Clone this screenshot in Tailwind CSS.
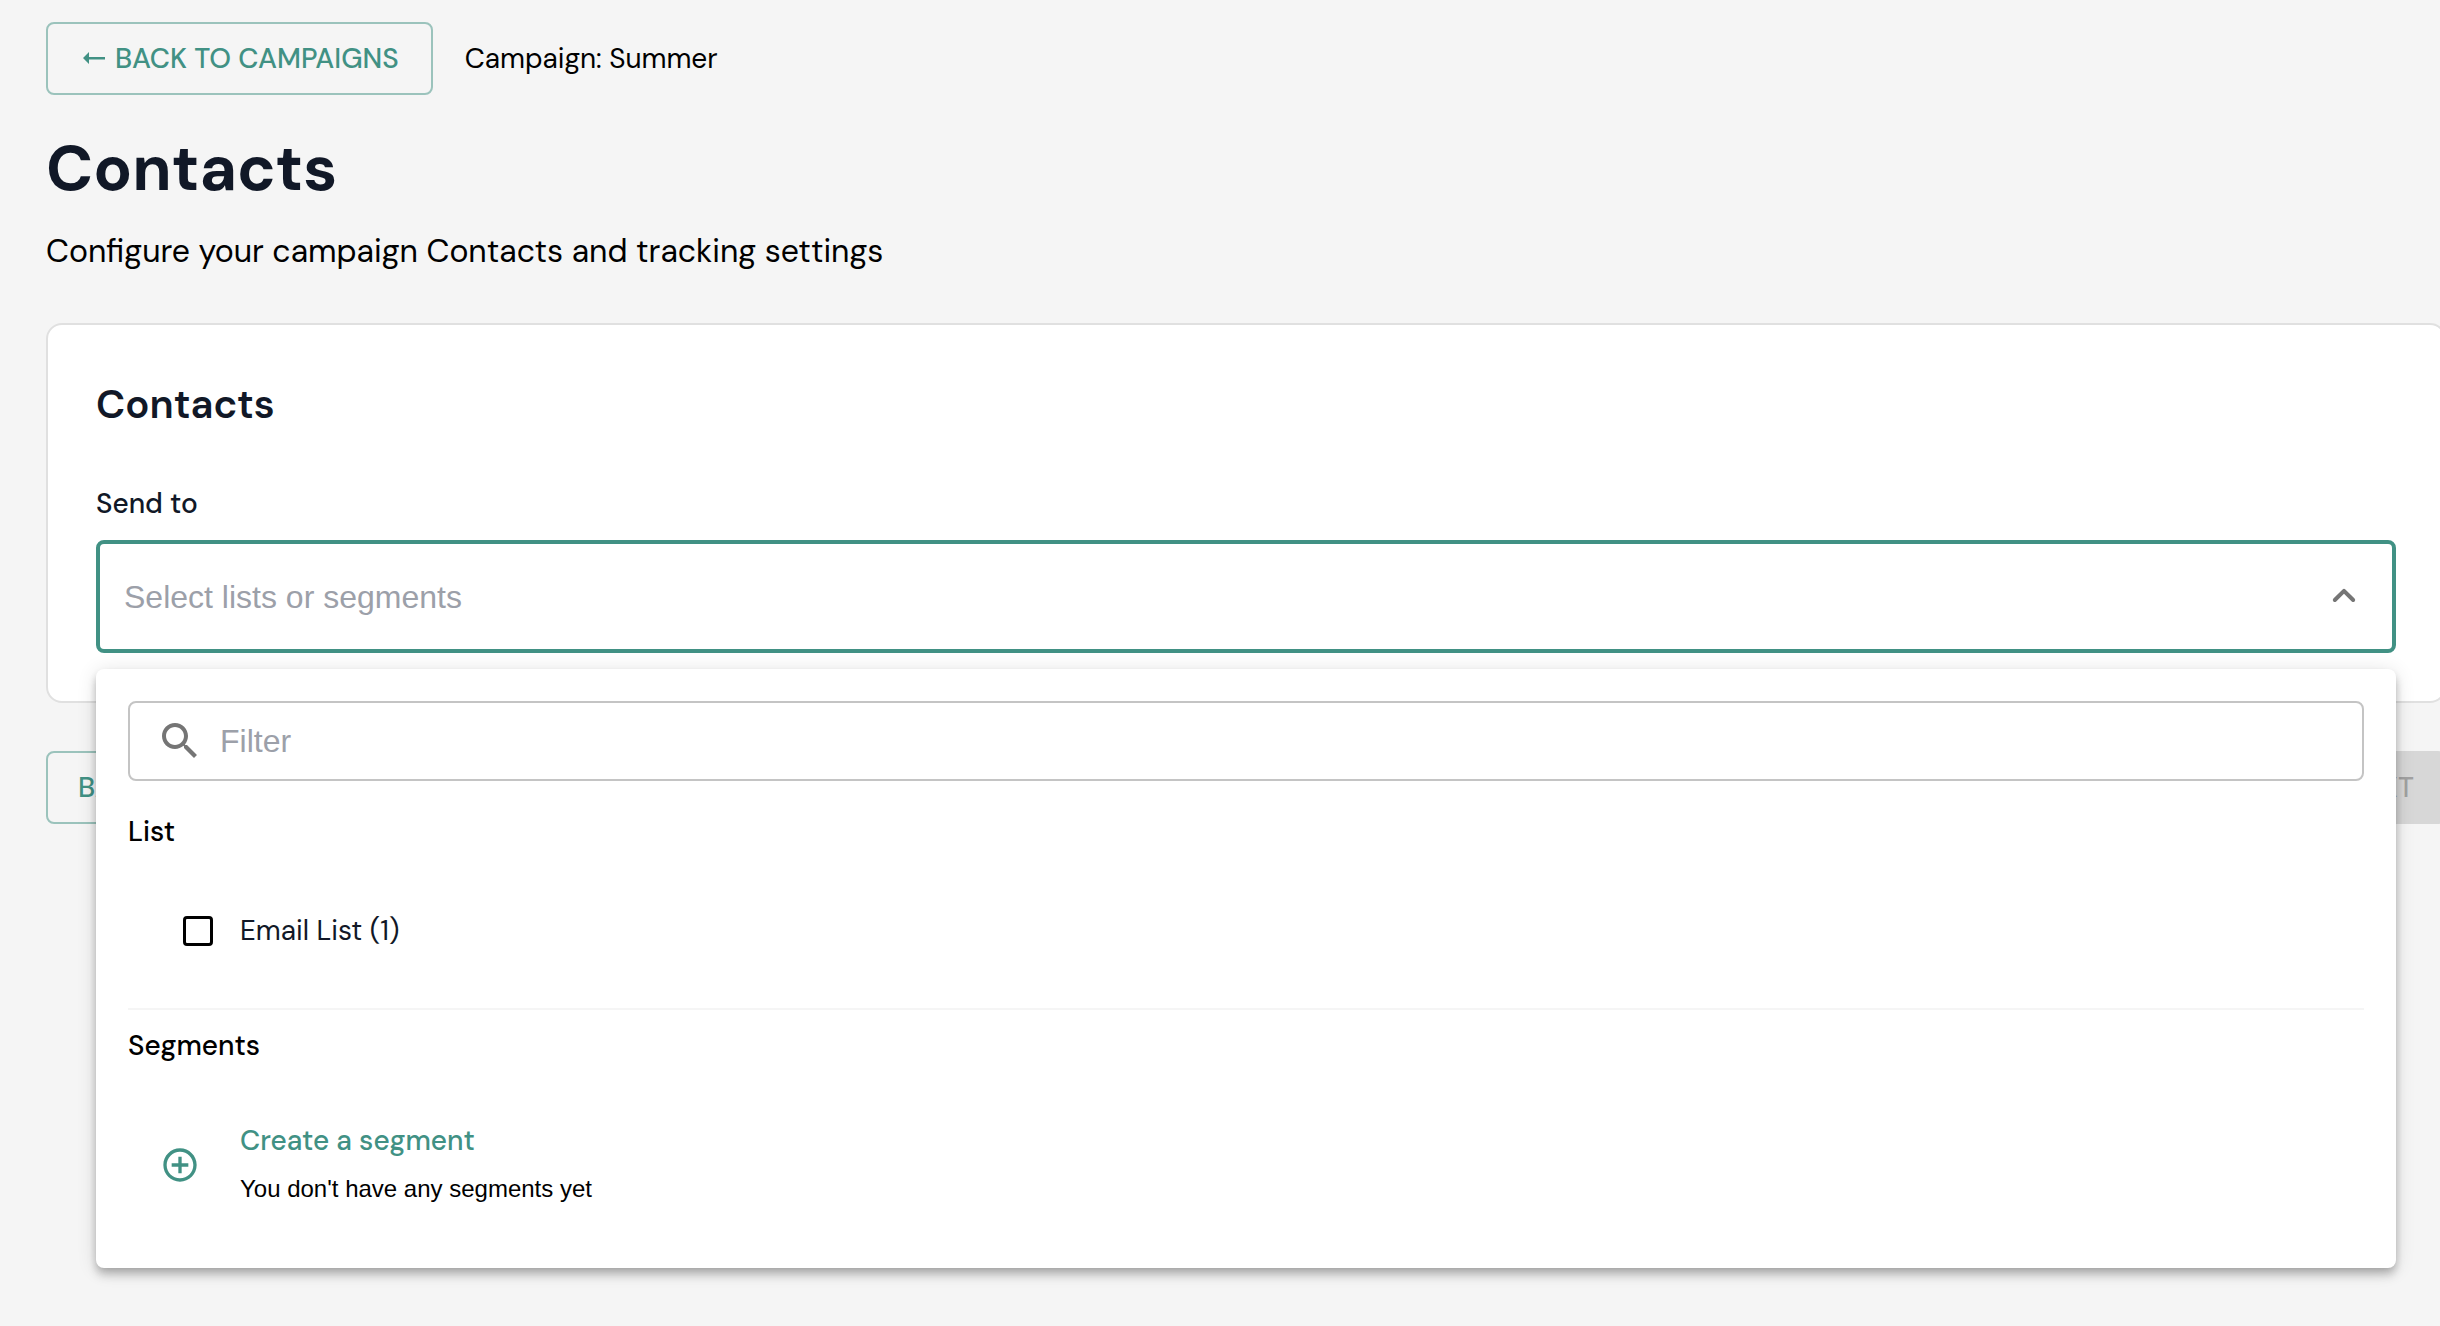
<!DOCTYPE html>
<html lang="en">
<head>
    <meta charset="UTF-8">
    <meta name="viewport" content="width=device-width, initial-scale=1.0">
    <title>Campaign Contacts</title>
    <script src="https://cdn.jsdelivr.net/npm/@tailwindcss/browser@4"></script>
</head>
<body class="min-h-screen overflow-x-hidden bg-[#f5f5f5] text-black font-['DM_Sans','Open_Sans',sans-serif]">
    <main class="ml-[46px] -mr-[6px] pt-[22px]">
        <div class="flex items-center gap-8">
            <button class="flex items-center gap-[7px] border-2 border-[#419184]/50 rounded-lg px-8 py-[10px] text-[28px] leading-[49px] font-medium text-[#419184]">
                <svg class="size-7" viewBox="0 0 28 28" fill="currentColor">
                    <path d="M3 13 9 7v5h16v2.4H9V19z"/>
                </svg>
                BACK TO CAMPAIGNS
            </button>
            <span class="text-[28px] leading-[49px]">Campaign: Summer</span>
        </div>

        <h1 class="mt-8 text-[64px] leading-[84px] font-bold text-[#111827]">Contacts</h1>
        <p class="mt-4 text-[32px] leading-[48px]">Configure your campaign Contacts and tracking settings</p>

        <section class="mt-12 border-2 border-[#e0e0e0] rounded-2xl bg-white p-12">
            <h2 class="text-[40px] leading-[62px] font-semibold text-[#111827]">Contacts</h2>
            <label for="sendTo" class="block mt-12 text-[28px] leading-[41px] font-medium text-[#111827]">Send to</label>

            <div class="relative mt-4">
                <select id="sendTo" class="block w-full h-[113px] appearance-none border-4 border-[#419184] rounded-lg bg-white px-6 text-[32px] text-[#9ca0a9] font-['Liberation_Sans',Arial,sans-serif] outline-none">
                    <option value="">Select lists or segments</option>
                </select>
                <svg class="absolute right-[28px] top-[32px] size-12 pointer-events-none" viewBox="0 0 24 24" fill="#757575">
                    <path d="M11.29 8.71 6.7 13.3a1 1 0 0 0 0 1.41 1 1 0 0 0 1.41 0L12 10.83l3.88 3.88a1 1 0 0 0 1.41 0 1 1 0 0 0 0-1.41L12.7 8.71a1 1 0 0 0-1.41 0z"/>
                </svg>

                <!-- Dropdown panel -->
                <div class="absolute inset-x-0 top-full z-10 mt-4 rounded-lg bg-white px-8 pt-8 pb-[58px] shadow-[0_4px_8px_-2px_rgba(0,0,0,0.2),0_8px_10px_0_rgba(0,0,0,0.14),0_2px_20px_0_rgba(0,0,0,0.12)]">
                    <div class="flex items-center gap-4 h-20 border-2 border-[#c4c4c4] rounded-lg pl-[26px] pr-6">
                        <svg class="size-12 shrink-0" viewBox="0 0 24 24" fill="#757575">
                            <path d="M15.5 14h-.79l-.28-.27C15.41 12.59 16 11.11 16 9.5 16 5.91 13.09 3 9.5 3S3 5.91 3 9.5 5.91 16 9.5 16c1.61 0 3.09-.59 4.23-1.57l.27.28v.79l5 4.99L20.49 19l-4.99-5zm-6 0C7.01 14 5 11.99 5 9.5S7.01 5 9.5 5 14 7.01 14 9.5 11.99 14 9.5 14z"/>
                        </svg>
                        <input id="filter" type="text" aria-label="Filter" placeholder="Filter" class="grow min-w-0 bg-transparent text-[32px] placeholder:text-[#9ca0a9] font-['Liberation_Sans',Arial,sans-serif] outline-none">
                    </div>

                    <div class="border-b-2 border-[#f5f5f5] pt-6 pb-8">
                        <h3 class="text-[28px] leading-[53px] font-medium">List</h3>
                        <div class="flex items-center mt-7 h-[90px]">
                            <div class="flex w-28 pl-[55px]">
                                <input id="emailList" type="checkbox" class="size-[30px] appearance-none border-3 border-black rounded-[4px] checked:bg-black">
                            </div>
                            <label for="emailList" class="text-[28px] leading-[42px] text-[#111827]">Email List (1)</label>
                        </div>
                    </div>

                    <div class="pt-[9px]">
                        <h3 class="text-[28px] leading-[53px] font-medium">Segments</h3>
                        <div class="flex items-center mt-12">
                            <div class="w-28 pl-8">
                                <svg class="size-10" viewBox="0 0 24 24" fill="#419184">
                                    <path d="M13 7h-2v4H7v2h4v4h2v-4h4v-2h-4V7zm-1-5C6.48 2 2 6.48 2 12s4.48 10 10 10 10-4.48 10-10S17.52 2 12 2zm0 18c-4.41 0-8-3.59-8-8s3.59-8 8-8 8 3.59 8 8-3.59 8-8 8z"/>
                                </svg>
                            </div>
                            <div>
                                <a href="#" class="block text-[28px] leading-[42px] font-medium text-[#419184]">Create a segment</a>
                                <p class="mt-[6px] text-[24px] leading-[42px] font-['Liberation_Sans',Arial,sans-serif]">You don't have any segments yet</p>
                            </div>
                        </div>
                    </div>
                </div>
            </div>
        </section>

        <div class="mt-12 flex justify-between">
            <button class="border-2 border-[#419184]/50 rounded-lg px-[30px] py-[10px] text-[28px] leading-[49px] font-medium text-[#419184]">BACK</button>
            <button disabled class="rounded-lg bg-black/12 px-8 py-3 text-[28px] leading-[49px] font-medium text-black/26">NEXT</button>
        </div>
    </main>
</body>
</html>
